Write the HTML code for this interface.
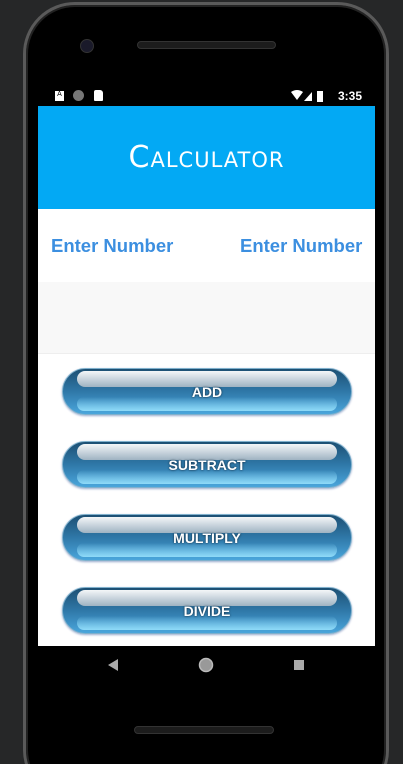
<!DOCTYPE html>
<html style="height:764px;overflow:hidden"><head><style>
*{margin:0;padding:0;box-sizing:border-box}
body{width:403px;height:764px;background:#262728;position:relative;overflow:hidden;font-family:"Liberation Sans",sans-serif}
.phone{position:absolute;left:23px;top:2px;width:366px;height:800px;border-radius:52px;background:#000;border:3px solid #5a5a5a;box-shadow:inset 0 0 0 2px #222}
.scr{position:absolute;left:38px;top:106px;width:337px;height:540px;background:#fff;overflow:hidden}
.bar{height:103px;background:#03a9f4;color:#fff;text-align:center;line-height:103px;font-size:30px;font-variant:small-caps;letter-spacing:1px;font-family:"DejaVu Sans",sans-serif}
.in{position:absolute;top:129px;font-size:18.5px;font-weight:bold;color:#3c8fe0}
.gray{position:absolute;top:176px;left:0;width:337px;height:72px;background:#f8f8f8;border-bottom:1px solid #eee}
.btn{position:absolute;left:24px;width:290px;height:47px;border-radius:24px;background:linear-gradient(#1c4f73,#2f78a8 50%,#4aa6dc);border:1px solid #7fb0cc;box-shadow:0 1px 2px #9ac}
.btn:before{content:"";position:absolute;left:14px;right:14px;top:2px;height:16px;border-radius:10px;background:linear-gradient(#f4f6f8,#9fb3c2)}
.btn:after{content:"";position:absolute;left:14px;right:14px;bottom:3px;height:14px;border-radius:10px;background:linear-gradient(rgba(100,200,240,0),#8fdaf8)}
.btn span{position:absolute;left:0;right:0;top:15px;text-align:center;color:#fff;font-weight:bold;font-size:14px;z-index:2;text-shadow:0 0 2px #123}
</style></head><body>
<div class="phone"></div>
<div style="position:absolute;left:80px;top:39px;width:14px;height:14px;border-radius:50%;background:#1a1a2a;border:1px solid #333"></div>
<div style="position:absolute;left:137px;top:41px;width:139px;height:8px;border-radius:4px;background:#1c1c1c;border:1px solid #333"></div>
<div style="position:absolute;left:134px;top:726px;width:140px;height:8px;border-radius:4px;background:#1c1c1c;border:1px solid #333"></div>
<div style="position:absolute;left:55px;top:91px;width:9px;height:10px;background:#fff;font-size:7px;text-align:center;color:#000">A</div>
<div style="position:absolute;left:73px;top:90px;width:11px;height:11px;border-radius:50%;background:#777"></div>
<div style="position:absolute;left:94px;top:90px;width:9px;height:11px;background:#fff;border-radius:2px 3px 1px 1px"></div>
<svg style="position:absolute;left:290px;top:89px" width="40" height="14"><path d="M1 3Q7 -1 13 3L7 11Z" fill="#fff"/><path d="M14 12L22 3V12Z" fill="#fff"/><rect x="27" y="2" width="6" height="11" fill="#fff"/></svg>
<div style="position:absolute;left:338px;top:89px;color:#fff;font-size:12px;font-weight:bold">3:35</div>
<div class="scr">
<div class="bar">Calculator</div>
<div class="in" style="left:13px">Enter Number</div>
<div class="in" style="left:202px">Enter Number</div>
<div class="gray"></div>
<div class="btn" style="top:262px"><span>ADD</span></div>
<div class="btn" style="top:335px"><span>SUBTRACT</span></div>
<div class="btn" style="top:408px"><span>MULTIPLY</span></div>
<div class="btn" style="top:481px"><span>DIVIDE</span></div>
</div>
<svg style="position:absolute;left:105px;top:656px" width="205" height="20"><path d="M3 9L13 3V15Z" fill="#aaa"/><circle cx="101" cy="9" r="6.5" fill="#999" stroke="#bbb" stroke-width="1.5"/><rect x="189" y="4" width="10" height="10" fill="#aaa"/></svg>
</body></html>
